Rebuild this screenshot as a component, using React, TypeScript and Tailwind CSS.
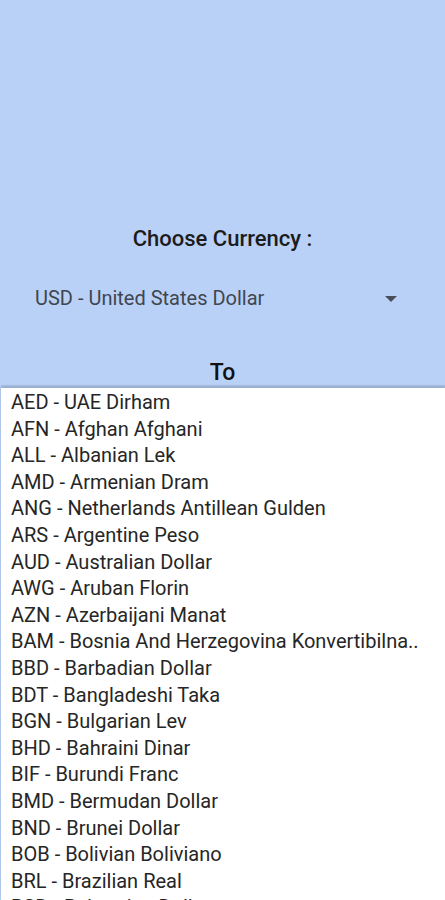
const CURRENCIES = [
  "AED - UAE Dirham",
  "AFN - Afghan Afghani",
  "ALL - Albanian Lek",
  "AMD - Armenian Dram",
  "ANG - Netherlands Antillean Gulden",
  "ARS - Argentine Peso",
  "AUD - Australian Dollar",
  "AWG - Aruban Florin",
  "AZN - Azerbaijani Manat",
  "BAM - Bosnia And Herzegovina Konvertibilna..",
  "BBD - Barbadian Dollar",
  "BDT - Bangladeshi Taka",
  "BGN - Bulgarian Lev",
  "BHD - Bahraini Dinar",
  "BIF - Burundi Franc",
  "BMD - Bermudan Dollar",
  "BND - Brunei Dollar",
  "BOB - Bolivian Boliviano",
  "BRL - Brazilian Real",
  "BSD - Bahamian Dollar",
  "BTN - Bhutanese Ngultrum",
];

export default function App() {
  return (
    <div
      className="relative h-[900px] w-[445px] overflow-hidden bg-[#bad1f7]"
      style={{ fontFamily: "Roboto, 'Noto Sans', sans-serif" }}
    >
      <div className="flex h-[385px] flex-col items-center">
        <div className="mt-[226px] text-[22px] font-medium leading-[26px] text-[#1c1c1c]">
          Choose Currency :
        </div>
        <div className="mt-[33px] flex w-full items-center pl-[35px] pr-[48px]">
          <span className="flex-1 text-[20px] leading-[26px] text-[#3f4650]">
            USD - United States Dollar
          </span>
          <svg width="12" height="6" viewBox="0 0 12 6" className="mt-[2px]">
            <path d="M0 0 L12 0 L6 6 Z" fill="#4a4f57" />
          </svg>
        </div>
        <div className="mt-[49px] text-[23px] font-medium leading-[26px] text-[#111]">
          To
        </div>
      </div>
      <div className="absolute left-[1px] right-0 top-[385px] h-[3px] bg-[#a9bfe3]" />
      <div className="absolute bottom-0 left-[1px] right-0 top-[388px] bg-white pt-[1px] shadow-[0_-1px_3px_rgba(0,0,0,0.15)]">
        {CURRENCIES.map((c) => (
          <div
            key={c}
            className="h-[26.6px] whitespace-nowrap pl-[10px] text-[20px] leading-[26.6px] text-[#262626]"
          >
            {c}
          </div>
        ))}
      </div>
    </div>
  );
}
